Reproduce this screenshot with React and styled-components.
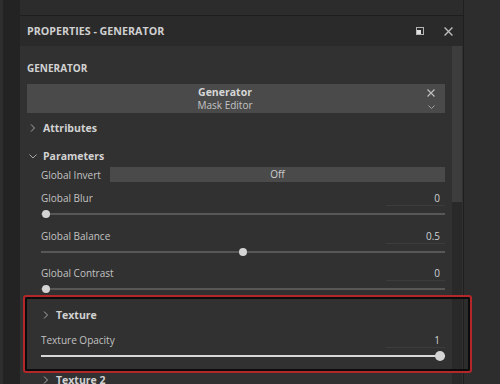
import React from "react";
import styled, { createGlobalStyle } from "styled-components";

const Global = createGlobalStyle`
  html, body {
    margin: 0;
    padding: 0;
    background: #2d2d2d;
    overflow: hidden;
  }
  body {
    font-family: "Open Sans", "Noto Sans", sans-serif;
  }
`;

const Frame = styled.div`
  position: relative;
  width: 500px;
  height: 384px;
  display: flex;
  overflow: hidden;
  background: #2d2d2d;
`;

const Gutter = styled.div`
  width: 17px;
  border-left: 3px solid #2e2e2e;
  background: #232323;
`;

const Panel = styled.div`
  width: 443px;
  display: flex;
  flex-direction: column;
`;

const Side = styled.div`
  flex: 1;
  border-left: 1px solid #1f1f1f;
  background: #2d2d2d;
`;

const TopStrip = styled.div`
  height: 15px;
  flex-shrink: 0;
  background: #2c2c2c;
  border-bottom: 1px solid #1e1e1e;
`;

const Header = styled.div`
  height: 30px;
  flex-shrink: 0;
  background: #2a2a2a;
  display: flex;
  align-items: center;
  padding: 0 10px 0 7px;
  gap: 20px;
`;

const HeaderTitle = styled.div`
  flex: 1;
  font-size: 10.7px;
  font-weight: 700;
  color: #cfcfcf;
`;

const Body = styled.div`
  flex: 1;
  display: flex;
  background: #313131;
  min-height: 0;
`;

const Content = styled.div`
  flex: 1;
  padding: 15px 7px 0 7px;
  display: flex;
  flex-direction: column;

  & > * {
    flex-shrink: 0;
  }
`;

const Scroll = styled.div`
  width: 10px;
  margin-right: 1px;
  background: #292929;
  display: flex;
  flex-direction: column;
`;

const Thumb = styled.div`
  height: 156px;
  background: #3d3d3d;
`;

const SectionTitle = styled.div`
  height: 14px;
  line-height: 14px;
  font-size: 10px;
  font-weight: 700;
  color: #d2d2d2;
`;

const NodeBox = styled.div`
  margin-top: 9px;
  height: 29px;
  padding-right: 22px;
  background: #4a4a4a;
  position: relative;
  display: flex;
  flex-direction: column;
  align-items: center;
  justify-content: center;
`;

const NodeName = styled.div`
  font-size: 10.5px;
  font-weight: 700;
  color: #d6d6d6;
  line-height: 14px;
`;

const NodeSub = styled.div`
  font-size: 10px;
  color: #c4c4c4;
  line-height: 13px;
`;

const NodeIcons = styled.div`
  position: absolute;
  right: 10px;
  top: 5px;
  display: flex;
  flex-direction: column;
  align-items: center;
  gap: 8px;
`;

const Group = styled.div`
  height: ${(p) => p.$h}px;
  margin-top: ${(p) => p.$mt || 0}px;
  display: flex;
  align-items: center;
  gap: 6px;
  padding-left: ${(p) => p.$indent}px;
  font-size: 10.5px;
  font-weight: 700;
  color: #d2d2d2;
`;

const Row = styled.div`
  margin-top: ${(p) => p.$mt || 0}px;
  padding-left: 14px;
  display: flex;
  flex-direction: column;
`;

const LabelRow = styled.div`
  height: 16px;
  display: flex;
  align-items: center;
  justify-content: space-between;
`;

const Label = styled.span`
  font-size: 10px;
  color: #c2c2c2;
  white-space: nowrap;
`;

const Value = styled.span`
  width: 59px;
  height: 16px;
  box-sizing: border-box;
  text-align: right;
  padding-right: 5px;
  border-bottom: 1px solid #3c3c3c;
  font-size: 10px;
  line-height: 17px;
  color: #cdd0d4;
`;

const InlineRow = styled.div`
  height: 15px;
  display: flex;
  align-items: center;
  gap: 9px;
`;

const Toggle = styled.div`
  flex: 1;
  height: 15px;
  background: #4a4a4a;
  text-align: center;
  font-size: 10px;
  line-height: 15px;
  color: #cfcfcf;
`;

const TrackArea = styled.div`
  height: 16px;
  position: relative;
  display: flex;
  align-items: center;
`;

const Track = styled.div`
  flex: 1;
  height: 2px;
  background: ${(p) => (p.$on ? "#d8d8d8" : "#575757")};
`;

const Knob = styled.div`
  position: absolute;
  top: 50%;
  width: ${(p) => p.$size}px;
  height: ${(p) => p.$size}px;
  margin-left: ${(p) => -p.$size / 2}px;
  margin-top: ${(p) => -p.$size / 2}px;
  border-radius: 50%;
  background: #d4d4d4;
`;

const Highlight = styled.div`
  position: absolute;
  left: 23px;
  top: 295px;
  width: 449px;
  height: 78px;
  box-sizing: border-box;
  border: 2px solid #b3272a;
  border-radius: 3px;
  box-shadow: inset 0 0 0 2px #0c0c0c;
  pointer-events: none;
`;

const Chevron = ({ down }) => (
  <svg width="8" height="8" viewBox="0 0 8 8">
    <path
      d={down ? "M0.5 2.5 L4 6 L7.5 2.5" : "M2 0.5 L5.5 4 L2 7.5"}
      fill="none"
      stroke="#a8a8a8"
      strokeWidth="1"
    />
  </svg>
);

const Cross = ({ size = 8, color = "#bdbdbd" }) => (
  <svg width={size} height={size} viewBox="0 0 8 8">
    <path d="M0.5 0.5 L7.5 7.5 M7.5 0.5 L0.5 7.5" stroke={color} strokeWidth="1.2" />
  </svg>
);

const Restore = () => (
  <svg width="8" height="8" viewBox="0 0 8 8">
    <rect x="0.5" y="0.5" width="7" height="7" fill="none" stroke="#b5b5b5" />
    <rect x="1" y="3" width="4" height="4" fill="#e0e0e0" />
  </svg>
);

function Slider({ label, value, pct, on, mt }) {
  return (
    <Row $mt={mt}>
      <LabelRow>
        <Label>{label}</Label>
        <Value>{value}</Value>
      </LabelRow>
      <TrackArea>
        <Track $on={on} />
        <Knob $size={on ? 10 : 8} style={{ left: `calc(5px + ${pct} * (100% - 10px))` }} />
      </TrackArea>
    </Row>
  );
}

export default function App() {
  return (
    <>
      <Global />
      <Frame>
        <Gutter />
        <Panel>
          <TopStrip />
          <Header>
            <HeaderTitle>PROPERTIES - GENERATOR</HeaderTitle>
            <Restore />
            <Cross size={9} />
          </Header>
          <Body>
            <Content>
              <SectionTitle>GENERATOR</SectionTitle>
              <NodeBox>
                <NodeName>Generator</NodeName>
                <NodeSub>Mask Editor</NodeSub>
                <NodeIcons>
                  <Cross size={8} />
                  <svg width="7" height="4" viewBox="0 0 7 4">
                    <path d="M0.5 0.5 L3.5 3.5 L6.5 0.5" fill="none" stroke="#a0a0a0" />
                  </svg>
                </NodeIcons>
              </NodeBox>
              <Group $h={20} $mt={5} $indent={2}>
                <Chevron />
                Attributes
              </Group>
              <Group $h={20} $mt={8} $indent={2}>
                <Chevron down />
                Parameters
              </Group>
              <Row $mt={1}>
                <InlineRow>
                  <Label>Global Invert</Label>
                  <Toggle>Off</Toggle>
                </InlineRow>
              </Row>
              <Slider label="Global Blur" value="0" pct={0} mt={8} />
              <Slider label="Global Balance" value="0.5" pct={0.5} mt={6} />
              <Slider label="Global Contrast" value="0" pct={0} mt={5} />
              <Group $h={20} $mt={8} $indent={15}>
                <Chevron />
                Texture
              </Group>
              <Slider label="Texture Opacity" value="1" pct={1} on mt={7} />
              <Group $h={20} $mt={6} $indent={15}>
                <Chevron />
                Texture 2
              </Group>
            </Content>
            <Scroll>
              <Thumb />
            </Scroll>
          </Body>
        </Panel>
        <Side />
        <Highlight />
      </Frame>
    </>
  );
}
